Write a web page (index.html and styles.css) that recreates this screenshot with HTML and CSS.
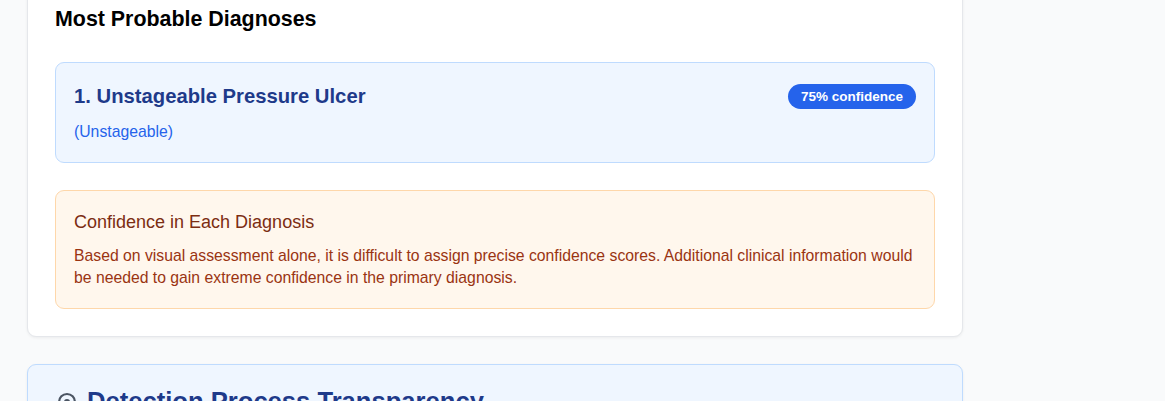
FILE: index.html
```html
<!DOCTYPE html>
<html lang="en">
<head>
<meta charset="utf-8">
<title>Most Probable Diagnoses</title>
<link rel="stylesheet" href="styles.css">
</head>
<body>
<main class="page">
  <section class="card">
    <h2 class="card-title">Most Probable Diagnoses</h2>
    <div class="diagnosis">
      <div class="diagnosis-head">
        <h3 class="diagnosis-name">1. Unstageable Pressure Ulcer</h3>
        <span class="badge">75% confidence</span>
      </div>
      <p class="diagnosis-stage">(Unstageable)</p>
    </div>
    <div class="note">
      <h4 class="note-title">Confidence in Each Diagnosis</h4>
      <p class="note-text">Based on visual assessment alone, it is difficult to assign precise confidence scores. Additional clinical information would be needed to gain extreme confidence in the primary diagnosis.</p>
    </div>
  </section>
  <section class="card card-info">
    <div class="info-head">
      <svg class="info-icon" width="20" height="20" viewBox="0 0 20 20" aria-hidden="true">
        <circle cx="10" cy="10" r="8" fill="none" stroke="#4b5563" stroke-width="2.2"/>
        <circle cx="10" cy="10" r="3" fill="#4b5563"/>
      </svg>
      <h2 class="info-title">Detection Process Transparency</h2>
    </div>
  </section>
</main>
</body>
</html>
```

FILE: styles.css
```css
* { box-sizing: border-box; }

html, body {
  margin: 0;
  padding: 0;
  background: #f9fafb;
  font-family: "Liberation Sans", Arial, sans-serif;
}

.page {
  width: 963px;
  padding-left: 27px;
  display: flex;
  flex-direction: column;
  gap: 27px;
  margin-top: -24px;
}

.card {
  background: #ffffff;
  border: 1px solid #e5e7eb;
  border-radius: 9px;
  padding: 27px;
  box-shadow: 0 1px 3px rgba(0, 0, 0, 0.06);
}

.card-title {
  margin: 0 0 28px;
  font-size: 21.4px;
  line-height: 30px;
  font-weight: 700;
  color: #000000;
}

.diagnosis {
  background: #eff6ff;
  border: 1px solid #bfdbfe;
  border-radius: 9px;
  padding: 18px;
}

.diagnosis-head {
  display: flex;
  justify-content: space-between;
  align-items: center;
}

.diagnosis-name {
  margin: 0;
  font-size: 20.25px;
  line-height: 30px;
  font-weight: 700;
  color: #1e3a8a;
}

.badge {
  background: #2563eb;
  color: #ffffff;
  font-size: 13.5px;
  font-weight: 700;
  line-height: 25px;
  height: 25px;
  padding: 0 13px;
  border-radius: 999px;
  margin-top: 1px;
}

.diagnosis-stage {
  margin: 9px 0 0;
  font-size: 15.75px;
  line-height: 24px;
  color: #2563eb;
}

.note {
  margin-top: 27px;
  background: #fff7ed;
  border: 1px solid #fed7aa;
  border-radius: 9px;
  padding: 18px 18px 19px;
}

.note-title {
  margin: 0 0 9px;
  font-size: 18px;
  line-height: 27px;
  font-weight: 400;
  color: #7c2d12;
}

.note-text {
  margin: 0;
  font-size: 15.75px;
  line-height: 22px;
  color: #9a3412;
}

.card-info {
  background: #eff6ff;
  border-color: #bfdbfe;
  padding-top: 21px;
  height: 120px;
}

.info-head {
  display: flex;
  align-items: center;
  gap: 10px;
}

.info-icon {
  flex: none;
  margin-left: 2px;
}

.info-title {
  margin: 0;
  font-size: 25.6px;
  line-height: 31px;
  font-weight: 700;
  color: #1e3a8a;
}
```
